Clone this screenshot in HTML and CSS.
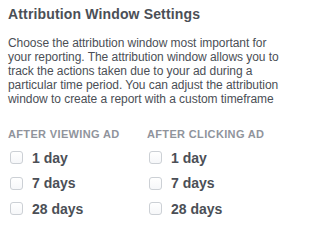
FILE: index.html
```html
<!DOCTYPE html>
<html>
<head>
<meta charset="utf-8">
<link rel="stylesheet" href="styles.css">
</head>
<body>
<div class="panel">
  <h1 class="title">Attribution Window Settings</h1>
  <p class="desc">Choose the attribution window most important for your reporting. The attribution window allows you to track the actions taken due to your ad during a particular time period. You can adjust the attribution window to create a report with a custom timeframe</p>
  <div class="columns">
    <div class="col">
      <div class="col-head">AFTER VIEWING AD</div>
      <label class="opt"><span class="box"></span><span class="lbl">1 day</span></label>
      <label class="opt"><span class="box"></span><span class="lbl">7 days</span></label>
      <label class="opt"><span class="box"></span><span class="lbl">28 days</span></label>
    </div>
    <div class="col">
      <div class="col-head">AFTER CLICKING AD</div>
      <label class="opt"><span class="box"></span><span class="lbl">1 day</span></label>
      <label class="opt"><span class="box"></span><span class="lbl">7 days</span></label>
      <label class="opt"><span class="box"></span><span class="lbl">28 days</span></label>
    </div>
  </div>
</div>
</body>
</html>
```
FILE: styles.css
```css
html, body {
  margin: 0;
  padding: 0;
  background: #ffffff;
}
body {
  font-family: "Liberation Sans", Arial, Helvetica, sans-serif;
  color: #4b4f56;
}
.panel {
  padding: 6px 8px 0 8px;
}
.title {
  margin: 0;
  font-size: 14px;
  line-height: 16px;
  font-weight: bold;
  letter-spacing: 0.15px;
  color: #4b4f56;
}
.desc {
  margin: 13.5px 0 0 0;
  width: 282px;
  font-size: 12px;
  line-height: 14px;
  letter-spacing: -0.05px;
  color: #4b4f56;
}
.columns {
  display: grid;
  grid-template-columns: 139px 139px;
  margin-top: 21px;
}
.col-head {
  font-size: 11px;
  line-height: 14px;
  font-weight: bold;
  letter-spacing: 0.35px;
  color: #90949c;
  margin-bottom: 4.5px;
}
.opt {
  display: flex;
  align-items: center;
  height: 25.5px;
}
.box {
  box-sizing: border-box;
  width: 13px;
  height: 13px;
  margin-left: 2px;
  margin-right: 9px;
  border: 1px solid #ccd0d5;
  border-radius: 3px;
  background: linear-gradient(#ffffff, #f6f7f9);
}
.lbl {
  font-size: 14px;
  font-weight: bold;
  color: #4b4f56;
}
```
